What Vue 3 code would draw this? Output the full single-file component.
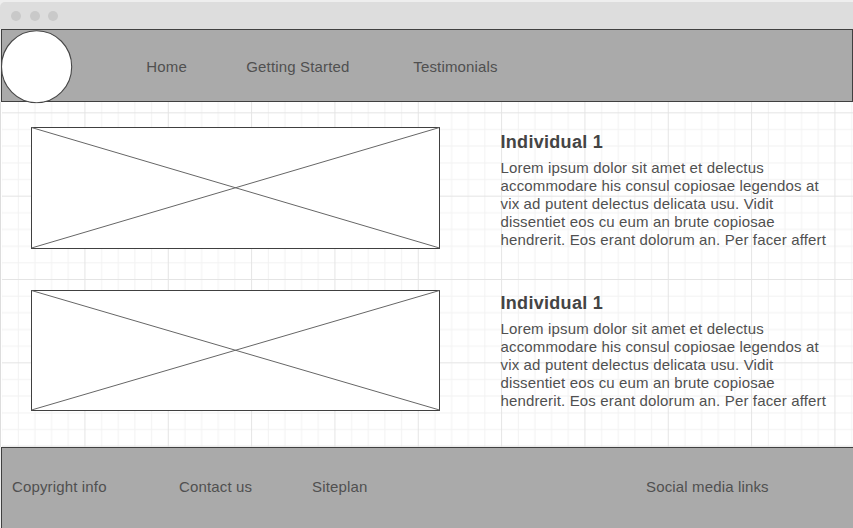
<script setup>
const people = [
  { id: 1, name: 'Individual 1', height: 122 },
  { id: 2, name: 'Individual 1', height: 121 },
]
const lines = [
  'Lorem ipsum dolor sit amet et delectus',
  'accommodare his consul copiosae legendos at',
  'vix ad putent delectus delicata usu. Vidit',
  'dissentiet eos cu eum an brute copiosae',
  'hendrerit. Eos erant dolorum an. Per facer affert',
]
</script>

<template>
  <div class="window">
    <div class="titlebar"><i class="dot" /><i class="dot" /><i class="dot" /></div>
    <header class="header">
      <svg class="logo" width="72" height="74" viewBox="0 0 72 74">
        <ellipse cx="35.6" cy="37.2" rx="35.1" ry="36" />
      </svg>
      <nav class="nav">
        <a>Home</a>
        <a>Getting Started</a>
        <a>Testimonials</a>
      </nav>
    </header>
    <main class="content">
      <svg class="grid" width="851" height="418">
        <defs>
          <pattern id="cells" width="83.333" height="83.333" x="-0.9" y="0" patternUnits="userSpaceOnUse">
            <path class="minor" d="M17.17 0V83.34M33.83 0V83.34M50.5 0V83.34M67.17 0V83.34M0 17.17H83.34M0 33.83H83.34M0 50.5H83.34M0 67.17H83.34" />
            <path class="major" d="M.5 0V83.34M0 .5H83.34" />
          </pattern>
        </defs>
        <rect width="851" height="418" fill="url(#cells)" />
      </svg>
      <section v-for="p in people" :key="p.id" class="row">
        <svg class="image" width="409" :height="p.height" :viewBox="`0 0 409 ${p.height}`">
          <rect x=".5" y=".5" width="408" :height="p.height - 1" />
          <path :d="`M.5 .5L408.5 ${p.height - 1}M.5 ${p.height - 1}L408.5 .5`" />
        </svg>
        <article class="copy">
          <h2>{{ p.name }}</h2>
          <p><span v-for="line in lines" :key="line">{{ line }}</span></p>
        </article>
      </section>
    </main>
    <footer class="footer">
      <a>Copyright info</a>
      <a>Contact us</a>
      <a>Siteplan</a>
      <a>Social media links</a>
    </footer>
  </div>
</template>

<style>
body {
  margin: 0;
  background: #eee;
}
</style>

<style scoped>
.window {
  box-sizing: border-box;
  width: 853px;
  height: 528px;
  padding-top: 2px;
  overflow: hidden;
  background: #eee;
  color: #505050;
  font: 15px/18px "Liberation Sans", Arial, sans-serif;
  letter-spacing: 0.15px;
  display: flex;
  flex-direction: column;
}
.titlebar {
  box-sizing: border-box;
  height: 27px;
  flex: none;
  padding: 1px 0 0 11px;
  display: flex;
  align-items: center;
  gap: 8.5px;
  background: #ddd;
  border-top-left-radius: 5px;
}
.dot {
  width: 10px;
  height: 10px;
  border-radius: 50%;
  background: #c9c9c9;
}
.header {
  box-sizing: border-box;
  height: 73px;
  flex: none;
  display: flex;
  align-items: flex-start;
  margin-left: 1px;
  background: #aaa;
  border: 1px solid #404040;
  position: relative;
  z-index: 1;
}
.logo {
  flex: none;
  margin: -1px 0 0 -1px;
  transform: translateY(0.5px);
}
.logo ellipse {
  fill: #fff;
  stroke: #484848;
  stroke-width: 1.1;
}
.nav {
  display: flex;
  padding: 28px 0 0 73.3px;
}
.nav a:nth-child(1) { width: 100px; }
.nav a:nth-child(2) { width: 167px; }
.content {
  position: relative;
  box-sizing: border-box;
  height: 345px;
  flex: none;
  padding: 25px 0 0 30px;
  border-left: 1px solid #ddd;
  background: #fff;
}
.grid {
  position: absolute;
  left: 1px;
  top: -73px;
}
.minor, .major {
  fill: none;
  stroke-width: 1;
}
.minor { stroke: #f2f2f2; }
.major { stroke: #e4e4e4; }
.row {
  position: relative;
  display: flex;
  align-items: flex-start;
  height: 163px;
}
.row:last-child { height: 157px; }
.image {
  flex: none;
  fill: #fff;
  stroke: #404040;
  stroke-width: 1;
}
.image path {
  fill: none;
  stroke: #666;
}
.copy {
  padding: 5px 0 0 60.5px;
}
.row:last-child .copy { padding-top: 3px; }
h2 {
  margin: 0 0 6px;
  color: #444;
  font-size: 18px;
  line-height: 21px;
  letter-spacing: 0.3px;
}
p { margin: 0; }
p span {
  display: block;
  white-space: nowrap;
}
.footer {
  box-sizing: border-box;
  flex: 1;
  display: flex;
  margin-left: 1px;
  padding: 30px 0 0 10px;
  background: #aaa;
  border: solid #404040;
  border-width: 1px 0 0 1px;
}
.footer a:nth-child(1) { width: 167px; }
.footer a:nth-child(2) { width: 133px; }
.footer a:nth-child(3) { width: 334px; }
</style>
